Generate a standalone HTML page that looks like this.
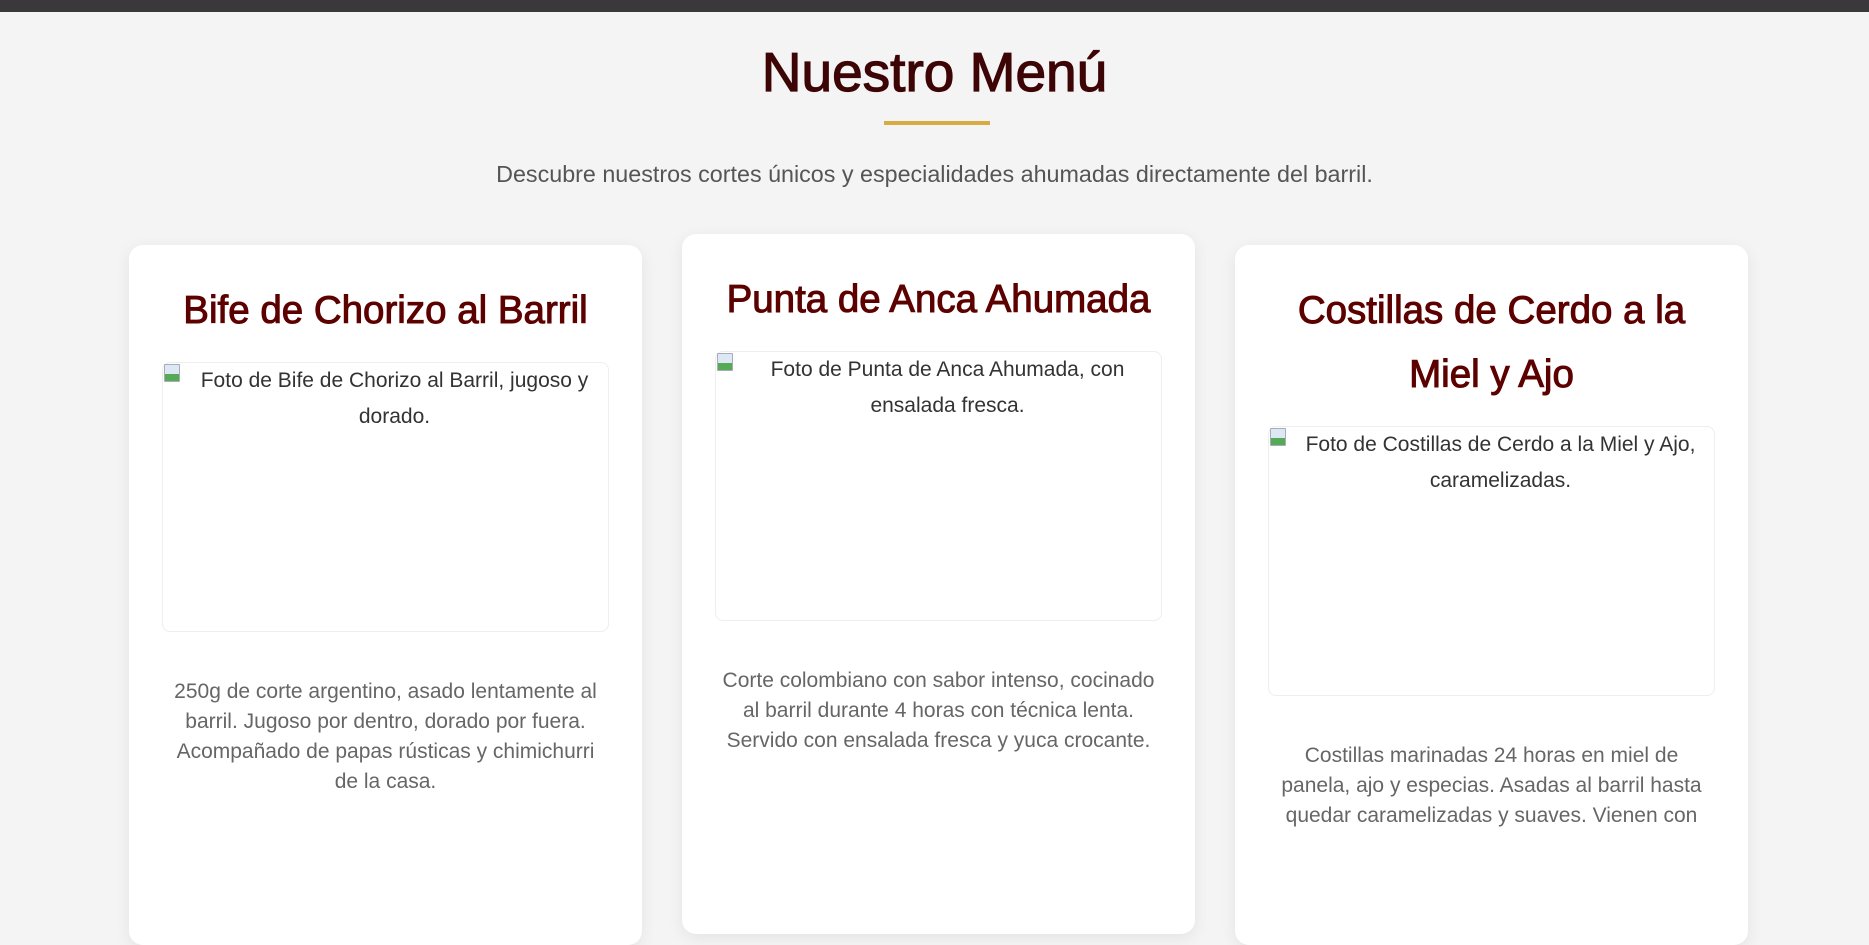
<!DOCTYPE html>
<html><head><meta charset="utf-8"><style>
*{box-sizing:border-box;margin:0;padding:0}
body{width:1869px;height:828px;overflow:hidden;background:#f4f4f4;font-family:"Liberation Sans",sans-serif;position:relative}
.bar{position:absolute;left:0;top:0;width:1869px;height:12px;background:#3a383b}
h1{position:absolute;top:40px;left:0;width:1869px;text-align:center;font-size:55px;font-weight:normal;-webkit-text-stroke:1.2px #3d0505;color:#3d0505;line-height:64px}
.line{position:absolute;left:884px;top:121px;width:106px;height:4px;background:#d8ac42}
.sub{position:absolute;top:160px;left:0;width:1869px;text-align:center;font-size:23.3px;color:#555;line-height:28px}
.card{position:absolute;width:513px;height:700px;background:#fff;border-radius:14px;box-shadow:0 4px 16px rgba(0,0,0,.07);padding:34px 33px;text-align:center}
.card h2{font-size:38.5px;font-weight:normal;-webkit-text-stroke:1px #5c0000;color:#5c0000;line-height:64px;margin-bottom:19px}
.img{height:270px;border:1px solid #eee;border-radius:8px;position:relative;font-size:21px;color:#333;line-height:36px;padding:0 8px 0 26px}
.img i{position:absolute;left:1px;top:1px;width:16px;height:18px;border:1px solid #aab;border-radius:1px;background:linear-gradient(#dde8f5 55%,#5a5 55%)}
.card p{margin-top:45px;font-size:21px;line-height:30px;color:#666;padding:0 6px}
</style></head><body>
<div class="bar"></div>
<h1>Nuestro Menú</h1>
<div class="line"></div>
<div class="sub">Descubre nuestros cortes únicos y especialidades ahumadas directamente del barril.</div>
<div class="card" style="left:129px;top:245px"><h2>Bife de Chorizo al Barril</h2><div class="img"><i></i>Foto de Bife de Chorizo al Barril, jugoso y dorado.</div><p>250g de corte argentino, asado lentamente al barril. Jugoso por dentro, dorado por fuera. Acompañado de papas rústicas y chimichurri de la casa.</p></div>
<div class="card" style="left:682px;top:234px"><h2>Punta de Anca Ahumada</h2><div class="img"><i></i>Foto de Punta de Anca Ahumada, con ensalada fresca.</div><p>Corte colombiano con sabor intenso, cocinado<br>al barril durante 4 horas con técnica lenta.<br>Servido con ensalada fresca y yuca crocante.</p></div>
<div class="card" style="left:1235px;top:245px"><h2>Costillas de Cerdo a la Miel y Ajo</h2><div class="img"><i></i>Foto de Costillas de Cerdo a la Miel y Ajo, caramelizadas.</div><p>Costillas marinadas 24 horas en miel de<br>panela, ajo y especias. Asadas al barril hasta<br>quedar caramelizadas y suaves. Vienen con</p></div>
</body></html>
